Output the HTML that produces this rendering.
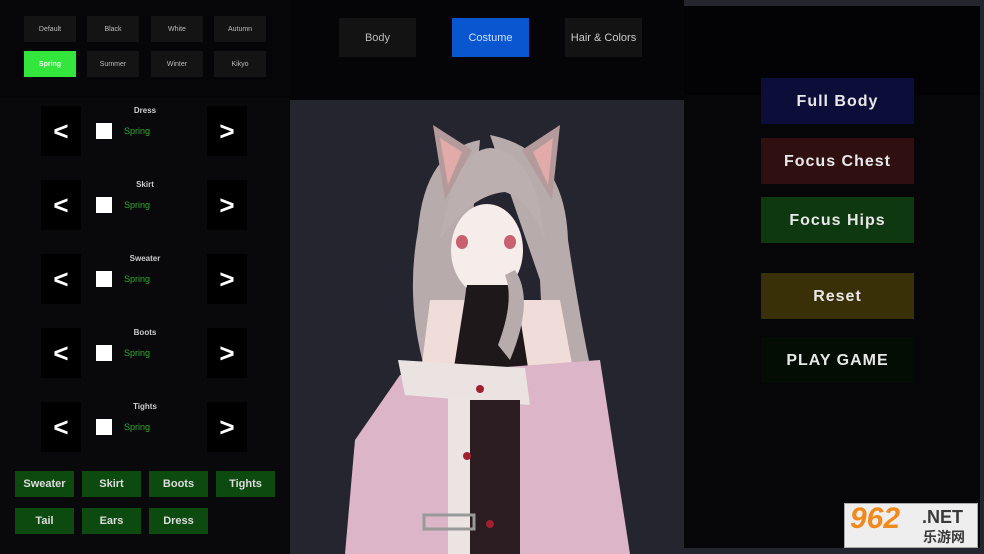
<!DOCTYPE html>
<html><head><meta charset="utf-8"><style>
*{margin:0;padding:0;box-sizing:border-box}
body{width:984px;height:554px;overflow:hidden;background:#25252f;font-family:"Liberation Sans",sans-serif;position:relative}
.a{position:absolute}
.c{display:flex;align-items:center;justify-content:center}
.g{background:#141414;color:#bbb;font-size:7px}
.arr{background:#000;color:#fff;font-size:26px;font-weight:bold;width:40px;height:50px}
.lbl{color:#ccc;font-size:8px;font-weight:bold;width:60px;text-align:center}
.sq{background:#fff;width:16px;height:16px}
.sp{color:#2fa82f;font-size:9px}
.bb{background:#0c4a10;color:#ddd;font-size:11px;font-weight:bold;width:59px;height:26px}
.rb{width:153px;height:46px;color:#e8e8e8;font-size:16px;font-weight:bold;letter-spacing:1px}
</style></head><body>
<div class="a" style="left:0;top:0;width:290px;height:554px;background:#09090b"></div>
<div class="a" style="left:0;top:0;width:290px;height:98px;background:#060608"></div>
<div class="a" style="left:290px;top:0;width:394px;height:100px;background:#050507"></div>
<div class="a" style="left:684px;top:6px;width:296px;height:542px;background:#060608"></div>
<div class="a" style="left:684px;top:6px;width:296px;height:89px;background:#030305"></div>

<div class="a c g" style="left:24px;top:16px;width:52px;height:26px">Default</div>
<div class="a c g" style="left:87px;top:16px;width:52px;height:26px">Black</div>
<div class="a c g" style="left:151px;top:16px;width:52px;height:26px">White</div>
<div class="a c g" style="left:214px;top:16px;width:52px;height:26px">Autumn</div>
<div class="a c g" style="left:24px;top:51px;width:52px;height:26px;background:#33e63c;color:#e8ffe8;font-weight:bold">Spring</div>
<div class="a c g" style="left:87px;top:51px;width:52px;height:26px">Summer</div>
<div class="a c g" style="left:151px;top:51px;width:52px;height:26px">Winter</div>
<div class="a c g" style="left:214px;top:51px;width:52px;height:26px">Kikyo</div>

<div class="a c" style="left:339px;top:18px;width:77px;height:39px;background:#131313;color:#bbb;font-size:11px">Body</div>
<div class="a c" style="left:452px;top:18px;width:77px;height:39px;background:#0a55d0;color:#cfe0ff;font-size:11px">Costume</div>
<div class="a c" style="left:565px;top:18px;width:77px;height:39px;background:#131313;color:#ccc;font-size:11px">Hair &amp; Colors</div>

<div class="a" style="left:0;top:106px">
<div class="a lbl" style="left:115px;top:0px">Dress</div><div class="a c arr" style="left:41px;top:0">&lt;</div><div class="a sq" style="left:96px;top:17px"></div><div class="a sp" style="left:124px;top:20px">Spring</div><div class="a c arr" style="left:207px;top:0">&gt;</div></div>
<div class="a" style="left:0;top:180px">
<div class="a lbl" style="left:115px;top:0px">Skirt</div><div class="a c arr" style="left:41px;top:0">&lt;</div><div class="a sq" style="left:96px;top:17px"></div><div class="a sp" style="left:124px;top:20px">Spring</div><div class="a c arr" style="left:207px;top:0">&gt;</div></div>
<div class="a" style="left:0;top:254px">
<div class="a lbl" style="left:115px;top:0px">Sweater</div><div class="a c arr" style="left:41px;top:0">&lt;</div><div class="a sq" style="left:96px;top:17px"></div><div class="a sp" style="left:124px;top:20px">Spring</div><div class="a c arr" style="left:207px;top:0">&gt;</div></div>
<div class="a" style="left:0;top:328px">
<div class="a lbl" style="left:115px;top:0px">Boots</div><div class="a c arr" style="left:41px;top:0">&lt;</div><div class="a sq" style="left:96px;top:17px"></div><div class="a sp" style="left:124px;top:20px">Spring</div><div class="a c arr" style="left:207px;top:0">&gt;</div></div>
<div class="a" style="left:0;top:402px">
<div class="a lbl" style="left:115px;top:0px">Tights</div><div class="a c arr" style="left:41px;top:0">&lt;</div><div class="a sq" style="left:96px;top:17px"></div><div class="a sp" style="left:124px;top:20px">Spring</div><div class="a c arr" style="left:207px;top:0">&gt;</div></div>

<div class="a c bb" style="left:15px;top:471px">Sweater</div>
<div class="a c bb" style="left:82px;top:471px">Skirt</div>
<div class="a c bb" style="left:149px;top:471px">Boots</div>
<div class="a c bb" style="left:216px;top:471px">Tights</div>
<div class="a c bb" style="left:15px;top:508px">Tail</div>
<div class="a c bb" style="left:82px;top:508px">Ears</div>
<div class="a c bb" style="left:149px;top:508px">Dress</div>

<div class="a c rb" style="left:761px;top:78px;background:#0d0d3a;padding-top:2px">Full Body</div>
<div class="a c rb" style="left:761px;top:138px;background:#300f10;padding-top:2px">Focus Chest</div>
<div class="a c rb" style="left:761px;top:197px;background:#0e3810;padding-top:2px">Focus Hips</div>
<div class="a c rb" style="left:761px;top:273px;background:#3a3008;padding-top:2px">Reset</div>
<div class="a c rb" style="left:761px;top:337px;background:#030d04;padding-top:2px">PLAY GAME</div>

<svg class="a" style="left:0;top:0" width="984" height="554">
<path d="M480 140 Q425 150 418 230 Q405 300 425 370 L475 385 L465 300 Z" fill="#b8abab"/>
<path d="M490 135 Q565 150 568 240 Q580 320 592 375 L545 385 L540 280 Z" fill="#b8abab"/>
<path d="M433 125 L472 150 L445 200 Z" fill="#b49a9a"/><path d="M440 138 L462 152 L448 185 Z" fill="#e2aaa8"/>
<path d="M560 125 L522 150 L552 200 Z" fill="#b49a9a"/><path d="M553 138 L533 152 L548 185 Z" fill="#e2aaa8"/>
<ellipse cx="487" cy="250" rx="36" ry="46" fill="#f6ecea"/>
<path d="M440 240 Q455 150 490 148 Q535 150 545 240 Q530 200 505 192 Q470 195 440 240Z" fill="#bcafaf"/>
<ellipse cx="462" cy="242" rx="6" ry="7" fill="#c86070"/><ellipse cx="510" cy="242" rx="6" ry="7" fill="#c86070"/>
<path d="M430 300 L560 300 L575 380 L420 380Z" fill="#f0dcd8"/>
<path d="M467 285 L515 285 L530 380 L452 380Z" fill="#1e181a"/>
<path d="M515 270 Q535 300 510 360 L498 345 Q515 300 505 275Z" fill="#b8abab"/>
<path d="M400 375 L600 360 L630 554 L345 554 L355 440Z" fill="#dcb6c8"/>
<path d="M398 360 L525 368 L530 405 L405 395Z" fill="#ebe3e2"/>
<rect x="470" y="400" width="50" height="154" fill="#2a1c20"/>
<rect x="448" y="395" width="22" height="159" fill="#ece4e2"/>
<circle cx="480" cy="389" r="4" fill="#a02030"/><circle cx="467" cy="456" r="4" fill="#a02030"/><circle cx="490" cy="524" r="4" fill="#a02030"/>
<rect x="424" y="515" width="50" height="14" fill="none" stroke="#999" stroke-width="3"/>
</svg>

<div class="a" style="left:844px;top:503px;width:134px;height:45px;background:#eeeeee;border:1px solid #aaa"></div>
<div class="a" style="left:850px;top:502px;font-size:30px;font-weight:bold;font-style:italic;color:#f08a1c">962</div>
<div class="a" style="left:922px;top:507px;font-size:18px;font-weight:bold;color:#3a3a3a">.NET</div>
<div class="a" style="left:923px;top:527px;font-size:14px;font-weight:bold;color:#3a3a3a;font-family:'Liberation Sans','Noto Sans CJK SC',sans-serif">乐游网</div>
</body></html>
